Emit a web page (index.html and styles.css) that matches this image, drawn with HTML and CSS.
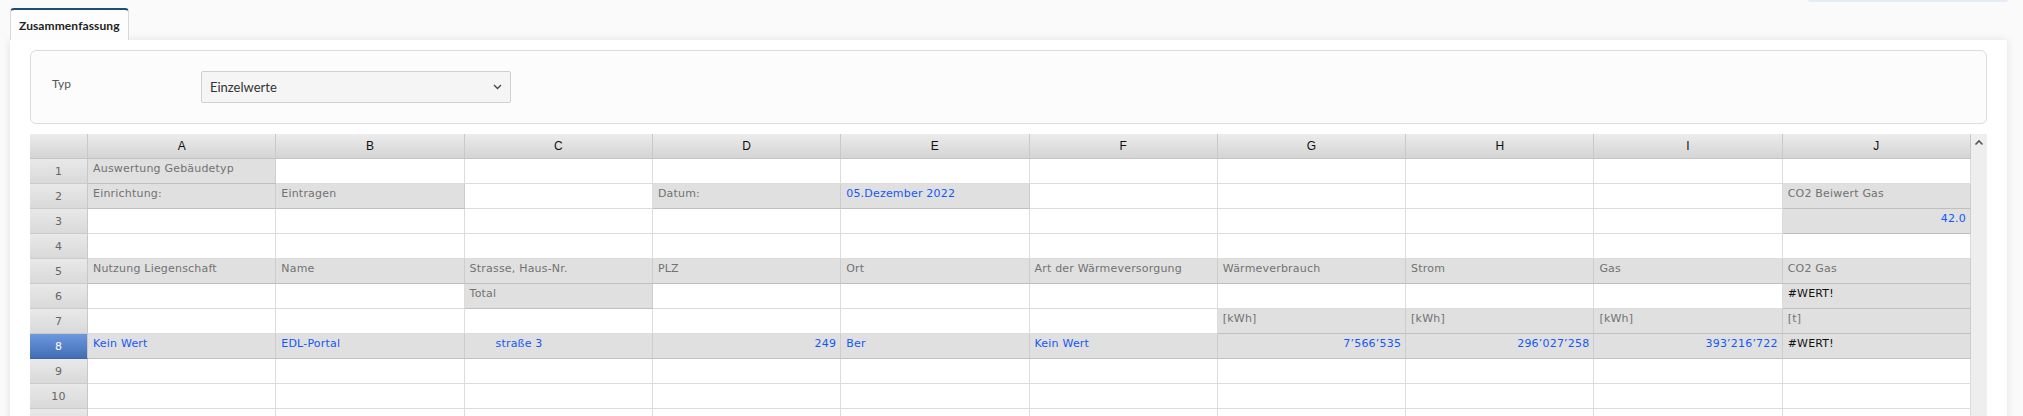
FILE: index.html
```html
<!DOCTYPE html>
<html lang="de">
<head>
<meta charset="utf-8">
<title>Zusammenfassung</title>
<link rel="stylesheet" href="styles.css">
</head>
<body>
<div class="topline"><div class="ghost"></div></div>
<div class="tabs">
  <div class="tab">Zusammenfassung</div>
</div>
<div class="panel">
  <div class="filter">
    <div class="label">Typ</div>
    <div class="select">
      <span>Einzelwerte</span>
      <svg class="chev" width="9" height="6" viewBox="0 0 9 6"><path d="M1 1 L4.5 4.5 L8 1" fill="none" stroke="#444" stroke-width="1.3"/></svg>
    </div>
  </div>
  <div class="sheet">
    <div class="grid">
      <div class="corner"></div>
      <div class="ch">A</div><div class="ch">B</div><div class="ch">C</div><div class="ch">D</div><div class="ch">E</div><div class="ch">F</div><div class="ch">G</div><div class="ch">H</div><div class="ch">I</div><div class="ch">J</div>

      <div class="rh">1</div>
      <div class="c g">Auswertung Gebäudetyp</div><div class="c"></div><div class="c"></div><div class="c"></div><div class="c"></div><div class="c"></div><div class="c"></div><div class="c"></div><div class="c"></div><div class="c"></div>

      <div class="rh">2</div>
      <div class="c g">Einrichtung:</div><div class="c g">Eintragen</div><div class="c"></div><div class="c g">Datum:</div><div class="c g b">05.Dezember 2022</div><div class="c"></div><div class="c"></div><div class="c"></div><div class="c"></div><div class="c g">CO2 Beiwert Gas</div>

      <div class="rh">3</div>
      <div class="c"></div><div class="c"></div><div class="c"></div><div class="c"></div><div class="c"></div><div class="c"></div><div class="c"></div><div class="c"></div><div class="c"></div><div class="c g b r">42.0</div>

      <div class="rh">4</div>
      <div class="c"></div><div class="c"></div><div class="c"></div><div class="c"></div><div class="c"></div><div class="c"></div><div class="c"></div><div class="c"></div><div class="c"></div><div class="c"></div>

      <div class="rh">5</div>
      <div class="c g">Nutzung Liegenschaft</div><div class="c g">Name</div><div class="c g">Strasse, Haus-Nr.</div><div class="c g">PLZ</div><div class="c g">Ort</div><div class="c g">Art der Wärmeversorgung</div><div class="c g">Wärmeverbrauch</div><div class="c g">Strom</div><div class="c g">Gas</div><div class="c g">CO2 Gas</div>

      <div class="rh">6</div>
      <div class="c"></div><div class="c"></div><div class="c g">Total</div><div class="c"></div><div class="c"></div><div class="c"></div><div class="c"></div><div class="c"></div><div class="c"></div><div class="c g k">#WERT!</div>

      <div class="rh">7</div>
      <div class="c"></div><div class="c"></div><div class="c"></div><div class="c"></div><div class="c"></div><div class="c"></div><div class="c g">[kWh]</div><div class="c g">[kWh]</div><div class="c g">[kWh]</div><div class="c g">[t]</div>

      <div class="rh sel">8</div>
      <div class="c g b">Kein Wert</div><div class="c g b">EDL-Portal</div><div class="c g b pre">       straße 3</div><div class="c g b r">249</div><div class="c g b">Ber</div><div class="c g b">Kein Wert</div><div class="c g b r">7’566’535</div><div class="c g b r">296’027’258</div><div class="c g b r">393’216’722</div><div class="c g k">#WERT!</div>

      <div class="rh">9</div>
      <div class="c"></div><div class="c"></div><div class="c"></div><div class="c"></div><div class="c"></div><div class="c"></div><div class="c"></div><div class="c"></div><div class="c"></div><div class="c"></div>

      <div class="rh">10</div>
      <div class="c"></div><div class="c"></div><div class="c"></div><div class="c"></div><div class="c"></div><div class="c"></div><div class="c"></div><div class="c"></div><div class="c"></div><div class="c"></div>

      <div class="rh"></div>
      <div class="c"></div><div class="c"></div><div class="c"></div><div class="c"></div><div class="c"></div><div class="c"></div><div class="c"></div><div class="c"></div><div class="c"></div><div class="c"></div>
    </div>
    <div class="vscroll">
      <svg class="up" width="10" height="7" viewBox="0 0 10 7"><path d="M1.5 5.5 L5 2 L8.5 5.5" fill="none" stroke="#555" stroke-width="1.6"/></svg>
    </div>
  </div>
</div>
</body>
</html>
```

FILE: styles.css
```css
html, body {
  margin: 0;
  padding: 0;
  overflow: hidden;
}
body {
  background: #fafafa;
  font-family: Lato, "Open Sans", sans-serif;
  color: #333;
}
.topline {
  height: 2px;
  display: flex;
  justify-content: flex-end;
  padding-right: 15px;
}
.ghost {
  width: 200px;
  height: 2px;
  background: #e4ecf8;
  border-radius: 0 0 3px 3px;
}
.tabs {
  display: flex;
  padding: 6px 0 0 10px;
}
.tab {
  box-sizing: border-box;
  width: 119px;
  height: 32px;
  border-top: 2px solid #1e4d7b;
  border-left: 1px solid #d8d8d8;
  border-right: 1px solid #d8d8d8;
  border-radius: 4px 4px 0 0;
  background: #fdfdfd;
  padding: 0 0 0 8px;
  display: flex;
  align-items: center;
  font-size: 12px;
  font-weight: 700;
  letter-spacing: 0.1px;
  color: #222;
  white-space: nowrap;
}
.panel {
  box-sizing: border-box;
  margin-left: 10px;
  width: 1997px;
  background: #fff;
  box-shadow: 0 0 8px rgba(0, 0, 0, 0.10);
  padding: 10px 20px 20px 20px;
}
.filter {
  box-sizing: border-box;
  height: 74px;
  border: 1px solid #dcdcdc;
  border-radius: 6px;
  background: #fcfcfc;
  padding: 20px 0 0 21px;
  display: flex;
  align-items: flex-start;
}
.label {
  width: 149px;
  padding-top: 5px;
  font-size: 12px;
  color: #555;
}
.select {
  box-sizing: border-box;
  width: 310px;
  height: 32px;
  border: 1px solid #d0d0d0;
  border-radius: 2px;
  background: #f5f5f5;
  display: flex;
  align-items: center;
  justify-content: space-between;
  padding: 0 8px 0 8px;
  font-size: 13px;
  color: #333;
}
.chev {
  display: block;
}
.sheet {
  margin-top: 10px;
  display: flex;
  align-items: stretch;
}
.grid {
  flex: 1;
  display: grid;
  grid-template-columns: 58px repeat(10, 1fr);
  grid-auto-rows: 25px;
  font-family: "DejaVu Sans", Verdana, sans-serif;
  font-size: 11px;
  letter-spacing: 0.2px;
}
.grid > div {
  box-sizing: border-box;
  height: 25px;
  overflow: hidden;
  white-space: nowrap;
}
.corner, .ch {
  background: linear-gradient(#ececec, #d4d4d4);
  border-right: 1px solid #c9c9c9;
  border-bottom: 1px solid #c4c4c4;
}
.ch {
  display: flex;
  align-items: center;
  justify-content: center;
  font-family: "Liberation Sans", Arial, sans-serif;
  font-size: 12px;
  color: #111;
  letter-spacing: 0;
}
.rh {
  background: linear-gradient(#e9e9e9, #d9d9d9);
  border-right: 1px solid #c8c8c8;
  border-bottom: 1px solid #cbcbcb;
  display: flex;
  align-items: center;
  justify-content: center;
  color: #666;
  font-size: 11px;
}
.rh.sel {
  background: linear-gradient(#6e98de, #416eb6);
  color: #fff;
  border-bottom-color: #3d63a3;
}
.c {
  background: #fff;
  border-right: 1px solid #dcdcdc;
  border-bottom: 1px solid #dcdcdc;
  padding: 2px 4px 0 5px;
  line-height: 15px;
  color: #727272;
}
.c.g {
  background: #e0e0e0;
  border-right-color: #cdcdcd;
  border-bottom-color: #bfbfbf;
}
.c.b {
  color: #1558f5;
}
.c.k {
  color: #111;
}
.c.r {
  text-align: right;
}
.c.pre {
  white-space: pre;
}
.vscroll {
  width: 16px;
  background: #eeeeee;
  display: flex;
  justify-content: center;
  align-items: flex-start;
  padding-top: 5px;
  box-sizing: border-box;
}
.up {
  display: block;
}
```
